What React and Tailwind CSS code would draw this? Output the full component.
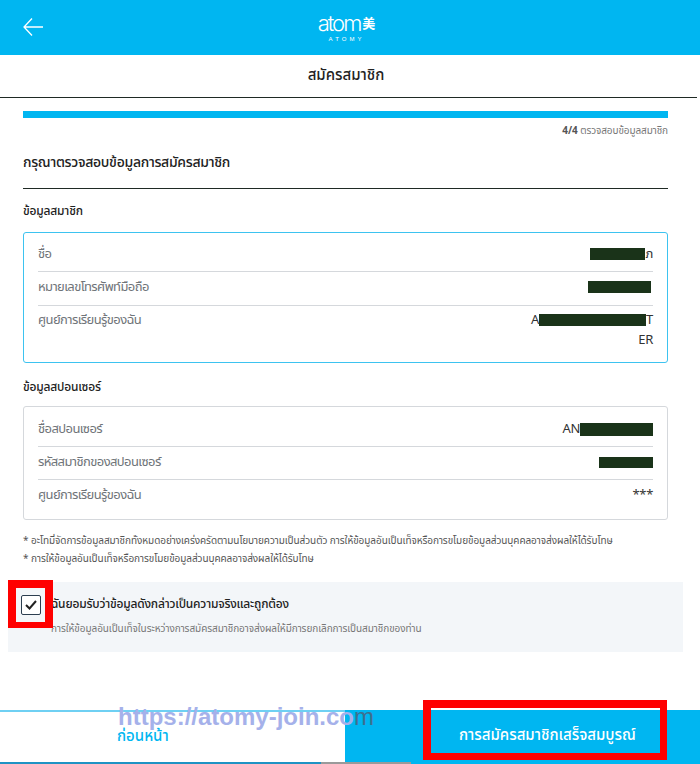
const font = { fontFamily: '"Noto Sans Thai", "Noto Sans", "Liberation Sans", sans-serif' };

// blacked out parts of the values
function Hidden({ className }) {
  return <span className={`inline-block bg-[#1a3319] align-middle ${className}`} />;
}

function Row({ label, children, last, className }) {
  return (
    <div className={`flex justify-between ${last ? '' : 'border-b border-[#d5d8dc]'} ${className}`}>
      <span className="text-[13px] leading-5 tracking-[-0.6px] text-[#6f7479]">{label}</span>
      <div className="text-right text-[13px] leading-5 tracking-[-0.3px] text-[#333]">{children}</div>
    </div>
  );
}

function Logo() {
  return (
    <div className="mr-[7px] flex flex-col items-center text-white">
      <div className="flex items-center font-['Inter'] text-[22px] font-light leading-[20px] tracking-[-2px]">
        atom<span className="ml-[2px] font-['Noto_Sans_CJK_SC'] text-[13px] font-bold tracking-normal">美</span>
      </div>
      <div className="mt-[2px] font-['Liberation_Sans'] text-[6px] leading-[8px] tracking-[3px]">ATOMY</div>
    </div>
  );
}

export default function App() {
  return (
    <div style={font} className="relative flex h-[764px] w-[700px] flex-col overflow-hidden bg-white">
      {/* header */}
      <header className="relative flex h-[55px] shrink-0 items-center justify-center bg-[#00b6f1]">
        <svg className="absolute left-[22px] top-[15px]" width="24" height="24" viewBox="0 0 24 24" fill="none" stroke="white" strokeWidth="1.3">
          <path d="M21 12H2M10 3.5 2 12l8 8.5" />
        </svg>
        <Logo />
      </header>
      <div className="flex h-[43px] w-[697px] shrink-0 items-center justify-center border-b border-[#1f2a24] pr-[5px] text-[15px] font-medium text-[#222]">
        สมัครสมาชิก
      </div>

      <main className="flex flex-col px-[23px] pt-[13px] pr-[32px]">
        <div className="h-[7px] bg-[#00b6f1]" />
        <div className="mt-[6px] text-right text-[10px] leading-[14px] tracking-[-0.1px] text-[#777]">
          <b className="text-[#555]">4/4</b> ตรวจสอบข้อมูลสมาชิก
        </div>
        <h2 className="mt-[15px] border-b border-[#1f2a24] pb-[15px] text-[14px] font-medium leading-[20px] tracking-[-0.3px] text-[#222]">
          กรุณาตรวจสอบข้อมูลการสมัครสมาชิก
        </h2>

        <h3 className="mt-[13px] text-[12px] font-medium leading-[18px] tracking-[-0.2px] text-[#222]">ข้อมูลสมาชิก</h3>
        <section className="mt-[12px] h-[131px] rounded-[3px] border border-[#3dc3f0] px-[14px] pt-[11px]">
          <Row label="ชื่อ" className="h-[28px]">
            <Hidden className="h-[12px] w-[55px]" />ภ
          </Row>
          <Row label="หมายเลขโทรศัพท์มือถือ" className="mt-[5px] h-[29px]">
            <Hidden className="mr-[2px] h-[12px] w-[63px]" />
          </Row>
          <Row label="ศูนย์การเรียนรู้ของฉัน" className="mt-[4px]" last>
            A<Hidden className="h-[12px] w-[107px]" />T
            <br />
            ER
          </Row>
        </section>

        <h3 className="mt-[15px] text-[12px] font-medium leading-[18px] tracking-[-0.2px] text-[#222]">ข้อมูลสปอนเซอร์</h3>
        <section className="mt-[10px] h-[114px] rounded-[3px] border border-[#d5d8dc] px-[14px] pt-[12px]">
          <Row label="ชื่อสปอนเซอร์" className="h-[28px]">
            AN<Hidden className="h-[13px] w-[73px]" />
          </Row>
          <Row label="รหัสสมาชิกของสปอนเซอร์" className="mt-[5px] h-[28px]">
            <Hidden className="h-[11px] w-[54px]" />
          </Row>
          <Row label="ศูนย์การเรียนรู้ของฉัน" className="mt-[5px]" last>
            ***
          </Row>
        </section>

        <p className="mt-[12px] text-[10px] leading-[18px] tracking-[-0.07px] text-[#555]">
          * อะโทมี่จัดการข้อมูลสมาชิกทั้งหมดอย่างเคร่งครัดตามนโยบายความเป็นส่วนตัว การให้ข้อมูลอันเป็นเท็จหรือการขโมยข้อมูลส่วนบุคคลอาจส่งผลให้ได้รับโทษ
          <br />
          * การให้ข้อมูลอันเป็นเท็จหรือการขโมยข้อมูลส่วนบุคคลอาจส่งผลให้ได้รับโทษ
        </p>
      </main>

      {/* agreement */}
      <section className="relative ml-[8px] mt-[14px] h-[70px] w-[675px] bg-[#f3f6f9] pl-[43px] pt-[13px]">
        <div className="text-[12px] font-medium leading-[18px] tracking-[-0.2px] text-[#222]">ฉันยอมรับว่าข้อมูลดังกล่าวเป็นความจริงและถูกต้อง</div>
        <div className="mt-[9px] text-[10px] leading-[14px] tracking-[-0.07px] text-[#777]">
          การให้ข้อมูลอันเป็นเท็จในระหว่างการสมัครสมาชิกอาจส่งผลให้มีการยกเลิกการเป็นสมาชิกของท่าน
        </div>
        <div className="absolute left-0 top-[-2px] flex h-[48px] w-[45px] items-center justify-center border-[8px] border-b-[6px] border-[#f00] bg-[#f3f6f9]">
          <div className="flex h-[20px] w-[20px] items-center justify-center rounded-[2px] border border-[#2c3e50] bg-white">
            <svg width="14" height="12" viewBox="0 0 14 12" fill="none" stroke="#222" strokeWidth="2">
              <path d="M2 6l3.5 3.5L12 2" />
            </svg>
          </div>
        </div>
      </section>

      {/* footer buttons */}
      <footer className="mt-auto flex shrink-0 flex-col">
        <div className="flex h-[52px]">
          <div className="flex w-[345px] items-center border-t-2 border-[#6fd0f3] pl-[117px] text-[15px] font-medium text-[#00b6f1]">
            ก่อนหน้า
          </div>
          <div className="flex flex-1 items-center bg-[#00b6f1] pl-[114px] text-[15px] font-medium text-white">
            การสมัครสมาชิกเสร็จสมบูรณ์
          </div>
        </div>
        <div className="flex h-[2px]">
          <div className="w-[321px] bg-[#1f93c4]" />
          <div className="w-[90px] bg-[#9a9a9a]" />
          <div className="flex-1 bg-[#00b6f1]" />
        </div>
      </footer>

      {/* annotation overlays */}
      <div className="absolute left-[423px] top-[700px] h-[60px] w-[244px] border-[8px] border-b-[7px] border-r-[7px] border-[#f00]" />
      <div className="absolute left-[118px] top-[703px] font-['Liberation_Sans'] text-[24px] font-bold leading-[28px] text-[#a5b1ea]">
        https://atomy-join.co<span className="font-normal text-[#3f6f8e]">m</span>
      </div>
    </div>
  );
}
